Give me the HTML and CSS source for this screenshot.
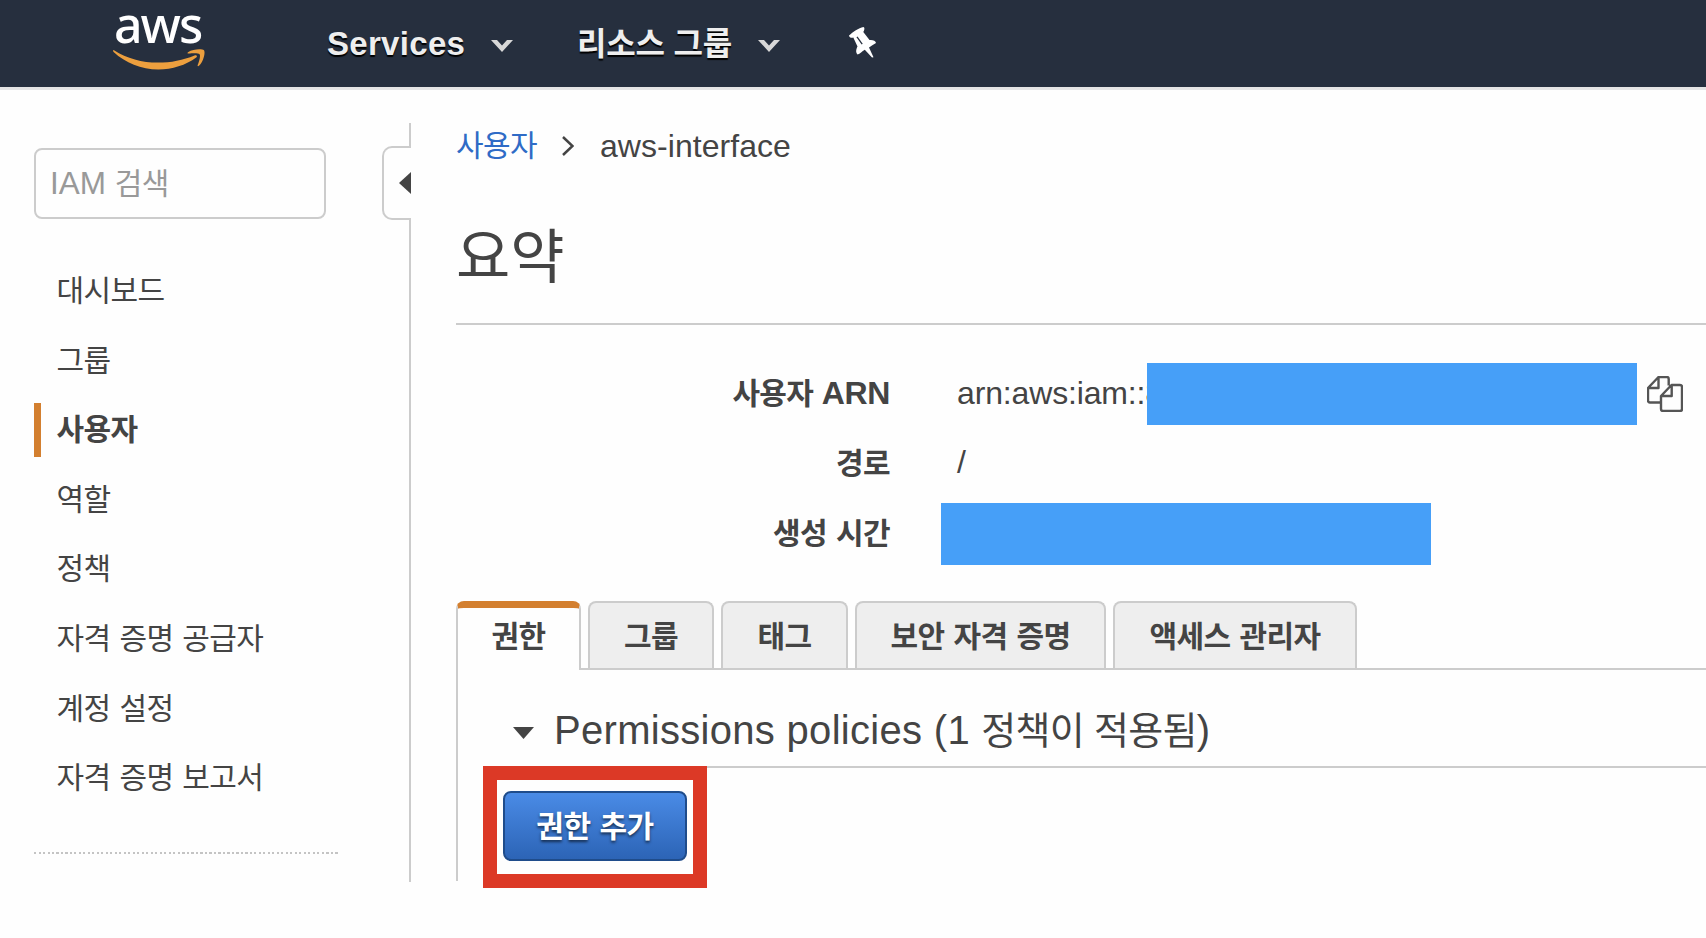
FILE: index.html
```html
<!DOCTYPE html>
<html lang="ko">
<head>
<meta charset="utf-8">
<title>IAM</title>
<link rel="stylesheet" href="styles.css">
</head>
<body>
<header class="topbar">
  <div class="logo">
    <span class="logo-text">aws</span>
    <svg class="smile" viewBox="0 0 92 21" width="92" height="21">
      <path d="M1 1.2C14 9.5 29 13.600 45 13.600C58 13.600 70 11 81.500 6.400C83.500 5.600 84.800 7.400 83.200 8.600C73 16.300 59 20.500 45.500 20.500C28 20.500 12.500 13.900.6 3C-.3 2.100.1.700 1 1.200Z"/>
      <path d="M75 3.200C80 0 89 -.4 91 1.300C92.600 3.400 90.500 12.500 86 16.800C85 17.600 84.300 17.100 84.700 16.100C86 12.800 87.800 6.700 86.600 5.200C85.400 3.700 79 4.200 75.800 4.500C74.500 4.600 74 3.900 75 3.200Z"/>
    </svg>
  </div>
  <nav class="topnav">
    <a class="top-item">Services</a>
    <svg class="chev chev-a" viewBox="0 0 22 12" width="22" height="12"><path d="M0 0H6L11 5.500L16 0H22L11 12Z"/></svg>
    <a class="top-item top-ko">리소스 그룹</a>
    <svg class="chev chev-b" viewBox="0 0 22 12" width="22" height="12"><path d="M0 0H6L11 5.500L16 0H22L11 12Z"/></svg>
    <svg class="pin" viewBox="0 0 28 31" width="28" height="31">
      <path d="M0 8.500C4 5 9.500 1 14.500 0C16 .8 15.500 3 14.300 5L20.500 13C23.500 12.600 26.800 13.600 27 16C24.500 17.600 22 19 20 20.500L24.500 30.300L23 30.500L15.800 22.700C13 24.500 11 26.500 8.600 27.500C6.500 25.500 7 22.500 8.500 19.500L4.300 10.600C2.500 11.200.2 10.600 0 8.500Z"/>
      <path class="pin-line" d="M8 9.800L13.200 17.200"/>
    </svg>
  </nav>
</header>
<div class="page">
  <aside class="sidebar">
    <div class="search">IAM <span class="ko">검색</span></div>
    <ul class="menu">
      <li>대시보드</li>
      <li>그룹</li>
      <li class="active">사용자</li>
      <li>역할</li>
      <li>정책</li>
      <li>자격 증명 공급자</li>
      <li>계정 설정</li>
      <li>자격 증명 보고서</li>
    </ul>
    <div class="dots"></div>
  </aside>
  <div class="divider">
    <div class="line line-top"></div>
    <div class="handle"><svg viewBox="0 0 12 22" width="12" height="22"><path d="M12 0V22L0 11Z"/></svg></div>
    <div class="line line-rest"></div>
  </div>
  <main class="main">
    <div class="crumbs">
      <a class="crumb-link ko">사용자</a>
      <svg class="crumb-sep" viewBox="0 0 12 20" width="12" height="20"><path d="M1 1L10.500 10L1 19"/></svg>
      <span class="crumb-name">aws-interface</span>
    </div>
    <h1 class="title">요약</h1>
    <dl class="details">
      <dt><span class="ko">사용자</span> ARN</dt>
      <dd class="arn"><span class="arn-text">arn:aws:iam::8</span><span class="mask"></span>
        <svg class="copy" viewBox="0 0 36 36" width="36" height="36"><path d="M13.500 26.500H3Q1 26.500 1 24.500V12L11.500 1H20Q21.700 1 21.700 3V9.500M1.500 12H11.500V1.500M14 20V33Q14 35 16 35H33Q35 35 35 33V11Q35 9 33 9H24.500L14 20H24.700V9.500"/></svg>
      </dd>
      <dt><span class="ko">경로</span></dt>
      <dd class="path">/</dd>
      <dt><span class="ko">생성 시간</span></dt>
      <dd class="made"><span class="mask"></span></dd>
    </dl>
    <div class="tabs">
      <div class="tab tab-on">권한</div>
      <div class="tab tab-b">그룹</div>
      <div class="tab tab-c">태그</div>
      <div class="tab tab-d">보안 자격 증명</div>
      <div class="tab tab-e">액세스 관리자</div>
    </div>
    <section class="panel">
      <h2 class="panel-head">
        <svg viewBox="0 0 21 12" width="21" height="12"><path d="M0 0H21L10.500 12Z"/></svg>
        <span class="panel-title">Permissions policies (1 <span class="ko-lg">정책이 적용됨</span>)</span>
      </h2>
      <div class="callout"><button class="add">권한 추가</button></div>
    </section>
  </main>
</div>
</body>
</html>
```
FILE: styles.css
```css
* { box-sizing: border-box; }
body {
  margin: 0;
  height: 938px;
  overflow: hidden;
  background: #fefefe;
  color: #444;
  font-family: "Liberation Sans", "Noto Sans CJK KR", sans-serif;
  font-size: 32px;
  line-height: 40px;
}
svg { display: block; flex: none; }
.ko { font-size: 30px; letter-spacing: -0.6px; word-spacing: 1.2px; }

.topbar {
  display: flex;
  height: 90px;
  padding-left: 113px;
  background: #262f3e;
  border-bottom: 3px solid #c4c6c9;
  border-image: linear-gradient(#8b9098, #e6e6e6) 3;
}
.logo { width: 92px; padding-top: 3px; }
.logo-text {
  display: block;
  height: 70px;
  margin: -14px 0 -10px;
  line-height: 70px;
  padding-left: 1px;
  color: #fff;
  font-family: "Noto Sans", sans-serif;
  font-size: 50px;
  font-weight: 500;
  letter-spacing: -2px;
}
.smile { fill: #ec9f3e; }
.topnav { display: flex; align-items: flex-start; }
.top-item {
  margin: 24px 0 0 122px;
  width: 139px;
  color: #eee;
  font-size: 33px;
  font-weight: 700;
  letter-spacing: 0.3px;
  text-shadow: 0 2px 1px #000;
  white-space: nowrap;
}
.top-ko { margin-left: 64px; width: 156px; font-size: 32px; letter-spacing: -0.2px; }
.chev { margin-top: 40px; fill: #d8d8d8; }
.chev-a { margin-left: 25px; }
.chev-b { margin-left: 25px; }
.pin { margin: 27px 0 0 69px; fill: #fff; }
.pin-line { fill: none; stroke: #262f3e; stroke-width: 1.3; }

.page { display: flex; }
.sidebar { width: 382px; padding: 58px 0 0 34px; }
.search {
  width: 292px;
  height: 71px;
  padding: 13px 0 0 14px;
  border: 2px solid #ccc;
  border-radius: 8px;
  color: #999;
  font-size: 31.5px;
}
.menu {
  margin: 45px 0 0;
  padding: 0;
  list-style: none;
  font-size: 30px;
  letter-spacing: -0.6px;
  word-spacing: 1.2px;
}
.menu li {
  display: flex;
  align-items: center;
  height: 54px;
  margin: 8px 0 15.6px;
  padding-left: 22.500px;
}
.menu .active { padding-left: 15.500px; border-left: 7px solid #d37f2f; font-weight: 700; }
.dots {
  width: 304px;
  height: 2px;
  margin-top: 47px;
  background: repeating-linear-gradient(90deg, #c4c4c4 0 2px, transparent 2px 4.5px);
}

.divider { width: 29px; padding-top: 33px; }
.line { margin-left: 27px; width: 2px; background: #ccc; }
.line-top { height: 23px; }
.line-rest { height: 662px; }
.handle {
  display: flex;
  align-items: center;
  justify-content: flex-end;
  height: 74px;
  border: 2px solid #ccc;
  border-right: 0;
  border-radius: 10px 0 0 10px;
}
.handle svg { fill: #444; }

.main { flex: 1; padding: 35px 0 0 45px; }
.crumbs { display: flex; align-items: center; height: 42px; }
.crumb-link { width: 106px; color: #2f6bc6; }
.crumb-sep { fill: none; stroke: #444; stroke-width: 2.5; }
.crumb-name { margin-left: 26px; letter-spacing: 0.05px; }
.title {
  height: 158px;
  margin: 0;
  padding-top: 53px;
  border-bottom: 2px solid #ccc;
  font-size: 59px;
  font-weight: 400;
  line-height: 76px;
}
.details {
  display: grid;
  grid-template-columns: 434px 1fr;
  grid-template-rows: 70px 69px 71px;
  align-items: center;
  margin: 34px 0 0;
}
.details dt { padding-bottom: 1px; text-align: right; font-weight: 700; letter-spacing: -0.4px; }
.details dd { margin: 0; padding-left: 67px; }
.details .arn { display: flex; align-items: center; }
.arn-text { width: 190px; padding-bottom: 3px; letter-spacing: -0.15px; white-space: nowrap; }
.details .path { padding-bottom: 3px; }
.mask { position: relative; width: 490px; height: 62px; background: #469ff8; }
.copy { margin-left: 10px; fill: none; stroke: #555; stroke-width: 2.4; stroke-linejoin: round; }
.details .made { padding: 1px 0 0 51px; }
.made .mask { display: block; }

.tabs {
  display: flex;
  height: 69px;
  margin-top: 32px;
  border-bottom: 2px solid #ccc;
}
.tab {
  height: 67px;
  margin-right: 7px;
  padding-top: 14px;
  border: 2px solid #ccc;
  border-bottom: 0;
  border-radius: 8px 8px 0 0;
  background: #eee;
  font-size: 30px;
  font-weight: 700;
  letter-spacing: -0.6px;
  word-spacing: 1.2px;
  text-align: center;
}
.tab-on {
  width: 125px;
  height: 69px;
  padding-top: 9px;
  border-top: 7px solid #d37f2f;
  background: #fefefe;
}
.tab-b { width: 126px; }
.tab-c { width: 127px; }
.tab-d { width: 251px; }
.tab-e { width: 244px; }
.panel { height: 211px; border-left: 2px solid #ccc; }
.panel-head {
  display: flex;
  align-items: flex-start;
  height: 98px;
  margin: 0 0 0 45px;
  padding: 0 0 0 10px;
  border-bottom: 2px solid #ccc;
  font-size: 40px;
  font-weight: 400;
  letter-spacing: 0.3px;
}
.panel-head svg { margin-top: 57px; fill: #444; }
.panel-title { margin: 36px 0 0 20px; line-height: 48px; white-space: nowrap; }
.ko-lg { font-size: 38px; letter-spacing: -0.7px; }
.callout {
  position: relative;
  width: 224px;
  height: 122px;
  margin: -2px 0 0 25px;
  padding: 11px 6px 0;
  border: 14px solid #dc3926;
  background: #fefefe;
}
.add {
  display: block;
  width: 184px;
  height: 70px;
  padding: 2px 0 0;
  border: 2px solid #1f4c8b;
  border-radius: 8px;
  background: linear-gradient(#4a8be6, #2c64b6);
  color: #fff;
  font: 700 30px/40px "Liberation Sans", "Noto Sans CJK KR", sans-serif;
  letter-spacing: -0.5px;
  word-spacing: 1.2px;
  text-shadow: 0 2px 3px rgba(0, 0, 0, 0.6);
}
```
